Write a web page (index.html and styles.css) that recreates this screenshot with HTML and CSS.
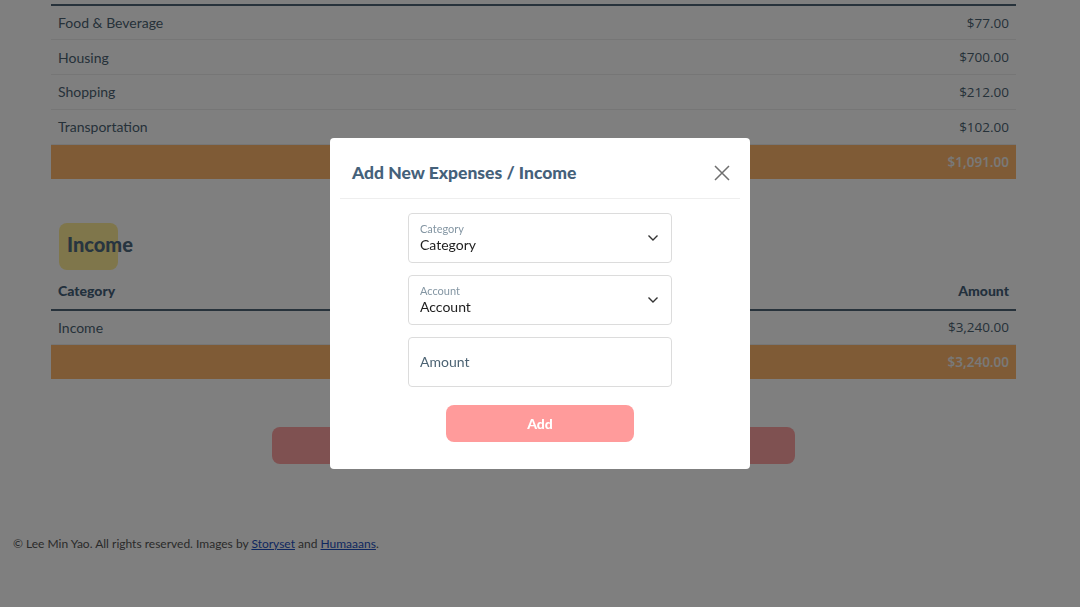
FILE: index.html
```html
<!DOCTYPE html>
<html lang="en">
<head>
<meta charset="utf-8">
<title>Budget</title>
<link rel="stylesheet" href="styles.css">
</head>
<body>
<main class="page">
  <table class="tbl tbl-top">
    <tbody>
      <tr><td>Food &amp; Beverage</td><td class="amt">$77.00</td></tr>
      <tr><td>Housing</td><td class="amt">$700.00</td></tr>
      <tr><td>Shopping</td><td class="amt">$212.00</td></tr>
      <tr><td>Transportation</td><td class="amt">$102.00</td></tr>
      <tr class="total total-first"><td></td><td class="amt">$1,091.00</td></tr>
    </tbody>
  </table>

  <h2 class="section-title"><span class="badge"></span><span class="section-text">Income</span></h2>
  <table class="tbl">
    <thead>
      <tr><th>Category</th><th class="amt">Amount</th></tr>
    </thead>
    <tbody>
      <tr><td>Income</td><td class="amt">$3,240.00</td></tr>
      <tr class="total"><td></td><td class="amt">$3,240.00</td></tr>
    </tbody>
  </table>

  <div class="cta-wrap"><button class="cta" type="button"></button></div>
</main>
<footer class="footer">© Lee Min Yao. All rights reserved. Images by <a href="#">Storyset</a> and <a href="#">Humaaans</a>.</footer>

<div class="overlay">
  <div class="modal">
    <div class="modal-head">
      <h3 class="modal-title">Add New Expenses / Income</h3>
      <button class="close" type="button" aria-label="Close">
        <svg width="16" height="16" viewBox="0 0 16 16"><path d="M1 1L15 15M15 1L1 15" stroke="#6f6f6f" stroke-width="1.5" fill="none"/></svg>
      </button>
    </div>
    <div class="modal-body">
      <div class="field">
        <div class="field-text">
          <span class="field-label">Category</span>
          <span class="field-value">Category</span>
        </div>
        <svg class="chev" width="12" height="8" viewBox="0 0 12 8"><path d="M1.5 1.5L6 6L10.5 1.5" stroke="#333" stroke-width="1.4" fill="none"/></svg>
      </div>
      <div class="field">
        <div class="field-text">
          <span class="field-label">Account</span>
          <span class="field-value">Account</span>
        </div>
        <svg class="chev" width="12" height="8" viewBox="0 0 12 8"><path d="M1.5 1.5L6 6L10.5 1.5" stroke="#333" stroke-width="1.4" fill="none"/></svg>
      </div>
      <div class="field field-input">
        <span class="placeholder">Amount</span>
      </div>
      <button class="add" type="button">Add</button>
    </div>
  </div>
</div>
</body>
</html>
```

FILE: styles.css
```css
* { box-sizing: border-box; }
html, body { margin: 0; padding: 0; }
body {
  background: #ffffff;
  font-family: "Lato", "Liberation Sans", sans-serif;
  color: #4c6373;
  height: 607px;
  overflow: hidden;
}
.page {
  padding: 4px 64px 0 51px;
}
.tbl {
  width: 100%;
  border-collapse: collapse;
  font-size: 14px;
}
.tbl-top { border-top: 2px solid #4f6576; }
.tbl td, .tbl th {
  height: 34.75px;
  padding: 0 7px;
  border-bottom: 1px solid #ececec;
  text-align: left;
  vertical-align: middle;
}
.tbl td { color: #4c6373; }
.tbl th {
  font-weight: 900;
  color: #45617a;
  border-bottom: 2px solid #4f6576;
  padding-bottom: 2px;
}
.tbl .amt {
  text-align: right;
  font-family: "Open Sans", "Liberation Sans", sans-serif;
  font-size: 13.5px;
}
.tbl th.amt { font-family: "Lato", sans-serif; font-size: 14px; }
.tbl .total td {
  background: #ffb76c;
  color: #f3f3f3;
  font-weight: 600;
  height: 34px;
  border-bottom: none;
}
.tbl .total-first td { height: 35px; }
.section-title {
  position: relative;
  margin: 44px 0 0 8px;
  height: 47px;
  padding: 0 0 6px 8px;
  display: flex;
  align-items: center;
  font-size: 20px;
  font-weight: 900;
  color: #4f6a80;
}
.badge {
  position: absolute;
  left: 0;
  top: 0;
  width: 59px;
  height: 47px;
  border-radius: 8px;
  background: #ffec96;
}
.section-text { position: relative; }
.section-title + .tbl { margin-top: 5px; }
.cta-wrap {
  display: flex;
  justify-content: center;
  margin-top: 48px;
}
.cta {
  width: 523px;
  height: 37px;
  border: none;
  border-radius: 8px;
  background: #ffa3a3;
}
.footer {
  padding: 72px 13px 0;
  font-size: 12px;
  color: #555;
}
.footer a { color: #1d4fc0; }

.overlay {
  position: fixed;
  inset: 0;
  background: rgba(0, 0, 0, 0.5);
  display: flex;
  align-items: center;
  justify-content: center;
}
.modal {
  width: 420px;
  height: 331px;
  background: #fff;
  border-radius: 4px;
  display: flex;
  flex-direction: column;
}
.modal-head {
  margin: 0 10px;
  height: 61px;
  padding: 0 10px 0 12px;
  border-bottom: 1px solid #eeeeee;
  display: flex;
  align-items: center;
  justify-content: space-between;
}
.modal-title {
  margin: 0;
  font-size: 17.5px;
  font-weight: 900;
  color: #45617a;
  padding-top: 8px;
}
.close {
  border: none;
  background: none;
  padding: 0;
  width: 16px;
  height: 16px;
  margin-top: 9px;
  display: flex;
}
.modal-body {
  padding-top: 14px;
  display: flex;
  flex-direction: column;
  align-items: center;
  gap: 12.5px;
}
.field {
  width: 264px;
  height: 49.5px;
  border: 1px solid #dcdcdc;
  border-radius: 4px;
  padding: 0 12px 0 11px;
  display: flex;
  align-items: center;
  justify-content: space-between;
}
.field-text {
  display: flex;
  flex-direction: column;
  gap: 1px;
}
.field-label {
  font-size: 11px;
  color: #8496a3;
}
.field-value {
  font-size: 14px;
  color: #1e1e1e;
}
.placeholder {
  font-size: 14px;
  color: #4c6373;
}
.add {
  margin-top: 6px;
  width: 188px;
  height: 37px;
  border: none;
  border-radius: 8px;
  background: #ff9b9b;
  color: #fff;
  font-family: "Lato", sans-serif;
  font-weight: 900;
  font-size: 14px;
  padding-bottom: 2px;
}
```
